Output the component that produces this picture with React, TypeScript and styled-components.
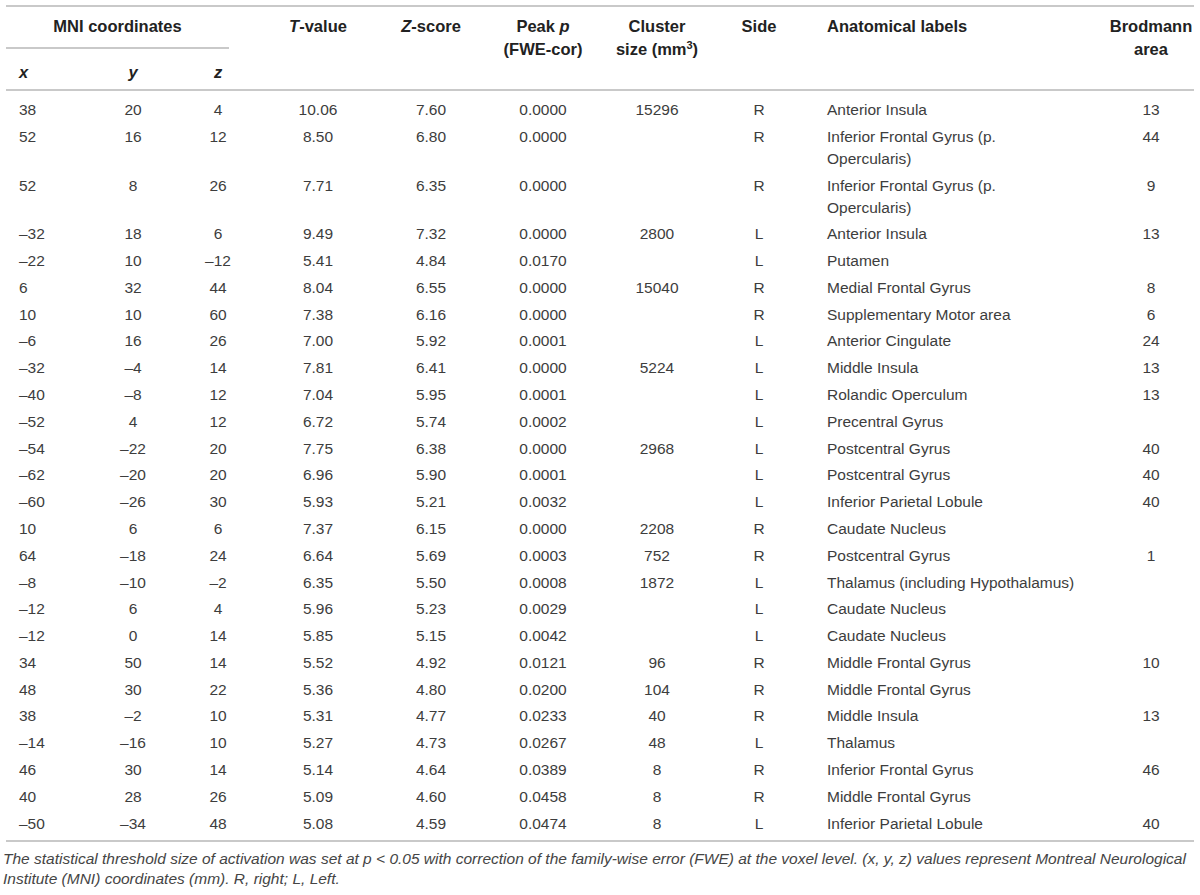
import React from "react";
import styled, { createGlobalStyle } from "styled-components";

const GlobalStyle = createGlobalStyle`
  html, body { margin: 0; padding: 0; background: #ffffff; }
  body { font-family: "Liberation Sans", Arial, sans-serif; color: #3d3d3d; }
`;

type Align = "left" | "center";
interface ColSpec {
  width: number;
  align: Align;
  pad: number;
}

const cols: ColSpec[] = [
  { width: 70, align: "left", pad: 13 },
  { width: 114, align: "center", pad: 0 },
  { width: 56, align: "center", pad: 0 },
  { width: 144, align: "center", pad: 0 },
  { width: 82, align: "center", pad: 0 },
  { width: 142, align: "center", pad: 0 },
  { width: 86, align: "center", pad: 0 },
  { width: 118, align: "center", pad: 0 },
  { width: 290, align: "left", pad: 9 },
  { width: 86, align: "center", pad: 0 },
];

const rows: string[][] = [
  ["38", "20", "4", "10.06", "7.60", "0.0000", "15296", "R", "Anterior Insula", "13"],
  ["52", "16", "12", "8.50", "6.80", "0.0000", "", "R", "Inferior Frontal Gyrus (p.\nOpercularis)", "44"],
  ["52", "8", "26", "7.71", "6.35", "0.0000", "", "R", "Inferior Frontal Gyrus (p.\nOpercularis)", "9"],
  ["–32", "18", "6", "9.49", "7.32", "0.0000", "2800", "L", "Anterior Insula", "13"],
  ["–22", "10", "–12", "5.41", "4.84", "0.0170", "", "L", "Putamen", ""],
  ["6", "32", "44", "8.04", "6.55", "0.0000", "15040", "R", "Medial Frontal Gyrus", "8"],
  ["10", "10", "60", "7.38", "6.16", "0.0000", "", "R", "Supplementary Motor area", "6"],
  ["–6", "16", "26", "7.00", "5.92", "0.0001", "", "L", "Anterior Cingulate", "24"],
  ["–32", "–4", "14", "7.81", "6.41", "0.0000", "5224", "L", "Middle Insula", "13"],
  ["–40", "–8", "12", "7.04", "5.95", "0.0001", "", "L", "Rolandic Operculum", "13"],
  ["–52", "4", "12", "6.72", "5.74", "0.0002", "", "L", "Precentral Gyrus", ""],
  ["–54", "–22", "20", "7.75", "6.38", "0.0000", "2968", "L", "Postcentral Gyrus", "40"],
  ["–62", "–20", "20", "6.96", "5.90", "0.0001", "", "L", "Postcentral Gyrus", "40"],
  ["–60", "–26", "30", "5.93", "5.21", "0.0032", "", "L", "Inferior Parietal Lobule", "40"],
  ["10", "6", "6", "7.37", "6.15", "0.0000", "2208", "R", "Caudate Nucleus", ""],
  ["64", "–18", "24", "6.64", "5.69", "0.0003", "752", "R", "Postcentral Gyrus", "1"],
  ["–8", "–10", "–2", "6.35", "5.50", "0.0008", "1872", "L", "Thalamus (including Hypothalamus)", ""],
  ["–12", "6", "4", "5.96", "5.23", "0.0029", "", "L", "Caudate Nucleus", ""],
  ["–12", "0", "14", "5.85", "5.15", "0.0042", "", "L", "Caudate Nucleus", ""],
  ["34", "50", "14", "5.52", "4.92", "0.0121", "96", "R", "Middle Frontal Gyrus", "10"],
  ["48", "30", "22", "5.36", "4.80", "0.0200", "104", "R", "Middle Frontal Gyrus", ""],
  ["38", "–2", "10", "5.31", "4.77", "0.0233", "40", "R", "Middle Insula", "13"],
  ["–14", "–16", "10", "5.27", "4.73", "0.0267", "48", "L", "Thalamus", ""],
  ["46", "30", "14", "5.14", "4.64", "0.0389", "8", "R", "Inferior Frontal Gyrus", "46"],
  ["40", "28", "26", "5.09", "4.60", "0.0458", "8", "R", "Middle Frontal Gyrus", ""],
  ["–50", "–34", "48", "5.08", "4.59", "0.0474", "8", "L", "Inferior Parietal Lobule", "40"],
];

const RULE = "#c9c9c9";

const Page = styled.div`
  width: 1200px;
  padding-top: 5px;
`;

const Table = styled.table`
  table-layout: fixed;
  width: 1188px;
  margin-left: 6px;
  border-collapse: separate;
  border-spacing: 0;
`;

const Column = styled.col<{ $w: number }>`
  width: ${(p) => p.$w}px;
`;

const HeadCell = styled.th<{ $align: Align; $pad: number; $span?: boolean }>`
  font-family: "Liberation Sans", Arial, sans-serif;
  font-weight: 700;
  font-size: 16.5px;
  line-height: 23px;
  color: #222222;
  text-align: ${(p) => p.$align};
  vertical-align: top;
  padding: 7.5px 0 0 ${(p) => p.$pad}px;
  border-top: 2px solid ${RULE};
  border-bottom: ${(p) => (p.$span ? "none" : `2px solid ${RULE}`)};
  white-space: nowrap;
`;

const AxisCell = styled.th<{ $align: Align; $pad: number }>`
  font-family: "Liberation Sans", Arial, sans-serif;
  font-weight: 700;
  font-style: italic;
  font-size: 16.5px;
  line-height: 23px;
  color: #222222;
  text-align: ${(p) => p.$align};
  vertical-align: top;
  padding: 11.5px 0 5.5px ${(p) => p.$pad}px;
  border-bottom: 2px solid ${RULE};
`;

const SpanRule = styled.div`
  margin-right: 17px;
  padding-bottom: 9.5px;
  border-bottom: 2px solid ${RULE};
  text-align: center;
`;

const Em = styled.i`
  font-style: italic;
`;

const Sup = styled.sup`
  font-size: 11px;
  line-height: 0;
  vertical-align: 6px;
`;

const Body = styled.tbody`
  tr:first-child td {
    padding-top: 8px;
  }
  tr:last-child td {
    padding-bottom: 5.4px;
    border-bottom: 2px solid ${RULE};
  }
`;

const Cell = styled.td<{ $align: Align; $pad: number }>`
  font-family: "Liberation Sans", Arial, sans-serif;
  font-size: 15.5px;
  line-height: 22px;
  color: #3d3d3d;
  text-align: ${(p) => p.$align};
  vertical-align: top;
  padding: 2.4px 0 2.4px ${(p) => p.$pad}px;
  white-space: nowrap;
`;

const Note = styled.p`
  margin: 0;
  padding: 7px 0 0 3px;
  width: 1197px;
  font-family: "Liberation Sans", Arial, sans-serif;
  font-style: italic;
  font-size: 15.5px;
  line-height: 20px;
  color: #454545;
`;

const renderText = (t: string) => {
  const parts = t.split("\n");
  return parts.map((p, i) => (
    <React.Fragment key={i}>
      {i > 0 && <br />}
      {p}
    </React.Fragment>
  ));
};

export default function App() {
  const c = cols;
  return (
    <>
      <GlobalStyle />
      <Page>
        <Table>
          <colgroup>
            {c.map((col, i) => (
              <Column key={i} $w={col.width} />
            ))}
          </colgroup>
          <thead>
            <tr>
              <HeadCell colSpan={3} $align="center" $pad={0} $span>
                <SpanRule>MNI coordinates</SpanRule>
              </HeadCell>
              <HeadCell rowSpan={2} $align="center" $pad={0}>
                <Em>T</Em>-value
              </HeadCell>
              <HeadCell rowSpan={2} $align="center" $pad={0}>
                <Em>Z</Em>-score
              </HeadCell>
              <HeadCell rowSpan={2} $align="center" $pad={0}>
                Peak <Em>p</Em>
                <br />
                (FWE-cor)
              </HeadCell>
              <HeadCell rowSpan={2} $align="center" $pad={0}>
                Cluster
                <br />
                size (mm<Sup>3</Sup>)
              </HeadCell>
              <HeadCell rowSpan={2} $align="center" $pad={0}>
                Side
              </HeadCell>
              <HeadCell rowSpan={2} $align="left" $pad={c[8].pad}>
                Anatomical labels
              </HeadCell>
              <HeadCell rowSpan={2} $align="center" $pad={0}>
                Brodmann
                <br />
                area
              </HeadCell>
            </tr>
            <tr>
              <AxisCell $align={c[0].align} $pad={c[0].pad}>x</AxisCell>
              <AxisCell $align={c[1].align} $pad={c[1].pad}>y</AxisCell>
              <AxisCell $align={c[2].align} $pad={c[2].pad}>z</AxisCell>
            </tr>
          </thead>
          <Body>
            {rows.map((r, ri) => (
              <tr key={ri}>
                {r.map((v, ci) => (
                  <Cell key={ci} $align={c[ci].align} $pad={c[ci].pad}>
                    {renderText(v)}
                  </Cell>
                ))}
              </tr>
            ))}
          </Body>
        </Table>
        <Note>
          The statistical threshold size of activation was set at p &lt; 0.05 with correction of the
          family-wise error (FWE) at the voxel level. (x, y, z) values represent Montreal Neurological
          Institute (MNI) coordinates (mm). R, right; L, Left.
        </Note>
      </Page>
    </>
  );
}
